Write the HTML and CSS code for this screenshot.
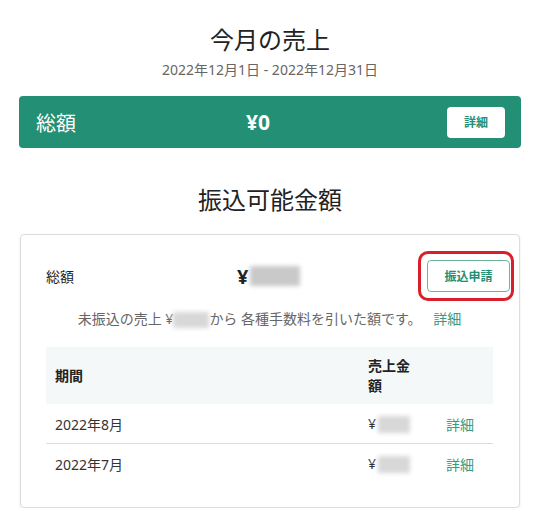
FILE: index.html
```html
<!DOCTYPE html>
<html lang="ja">
  <head>
    <meta charset="UTF-8" />
    <title>売上</title>
    <link rel="stylesheet" href="styles.css">
  </head>
  <body>
    <div class="page">
      <section class="month">
        <h2 class="section-title">今月の売上</h2>
        <p class="period">2022年12月1日 - 2022年12月31日</p>
        <div class="total-bar">
          <span class="total-label">総額</span>
          <span class="total-amount">¥0</span>
          <a href="#" class="btn-white">詳細</a>
        </div>
      </section>

      <section class="payout">
        <h2 class="section-title">振込可能金額</h2>
        <div class="card">
          <div class="card-top">
            <span class="card-label">総額</span>
            <span class="card-amount">¥<span class="masked masked-lg"></span></span>
            <span class="highlight">
              <a href="#" class="btn-outline">振込申請</a>
            </span>
          </div>
          <p class="note">
            未振込の売上 ¥<span class="masked masked-sm"></span>から 各種手数料を引いた額です。
            <a href="#" class="link">詳細</a>
          </p>

          <table class="history">
            <colgroup>
              <col class="col-period">
              <col class="col-amount">
              <col class="col-link">
            </colgroup>
            <thead>
              <tr>
                <th>期間</th>
                <th class="th-amount">売上金額</th>
                <th></th>
              </tr>
            </thead>
            <tbody>
              <tr>
                <td>2022年8月</td>
                <td>¥<span class="masked masked-row"></span></td>
                <td><a href="#" class="link">詳細</a></td>
              </tr>
              <tr>
                <td>2022年7月</td>
                <td>¥<span class="masked masked-row"></span></td>
                <td><a href="#" class="link">詳細</a></td>
              </tr>
            </tbody>
          </table>
        </div>
      </section>
    </div>
  </body>
</html>
```

FILE: styles.css
```css
body {
  font-family: "Noto Sans", "Noto Sans CJK JP", sans-serif;
  background-color: #fff;
  color: #222;
  margin: 0;
  padding: 0;
}

.page {
  margin: 0 20px 0 19px;
  padding-top: 22px;
}

.section-title {
  margin: 0;
  text-align: center;
  font-size: 24px;
  font-weight: normal;
  line-height: 35px;
  color: #222;
}

.period {
  margin: 3px 0 0;
  text-align: center;
  font-size: 14px;
  line-height: 20px;
  color: #666;
}

.total-bar {
  margin-top: 16px;
  height: 52px;
  background-color: #238f74;
  border-radius: 4px;
  display: flex;
  align-items: center;
  padding: 0 16px 0 17px;
  color: white;
}

.total-label {
  font-size: 20px;
  width: 210px;
}

.total-amount {
  font-size: 21px;
  font-weight: bold;
  flex: 1;
}

.btn-white {
  background-color: white;
  color: #238f74;
  text-decoration: none;
  font-size: 12px;
  font-weight: bold;
  width: 58px;
  height: 31px;
  border-radius: 4px;
  display: flex;
  align-items: center;
  justify-content: center;
}

.payout {
  margin-top: 34px;
}

.card {
  margin: 17px 1px 0;
  border: 1px solid #ddd;
  border-radius: 4px;
  box-shadow: 0 1px 3px rgba(0, 0, 0, 0.08);
  padding: 16px 26px 24px 25px;
}

.card-top {
  display: flex;
  align-items: center;
  height: 50px;
}

.card-label {
  font-size: 14px;
  width: 191px;
}

.card-amount {
  font-size: 20px;
  font-weight: bold;
  flex: 1;
  display: flex;
  align-items: center;
}

.masked {
  display: inline-block;
  background-color: #c9c9c9;
  filter: blur(2px);
  vertical-align: middle;
}

.masked-lg {
  width: 50px;
  height: 20px;
  margin-left: 2px;
}

.masked-sm {
  width: 36px;
  height: 16px;
  background-color: #d8d8d8;
}

.masked-row {
  width: 32px;
  height: 17px;
  margin-left: 2px;
  background-color: #d8d8d8;
}

/* 赤枠で囲んだ振込申請ボタン */
.highlight {
  border: 3px solid #d9202a;
  border-radius: 10px;
  padding: 6px 1px 6px 6px;
  margin-right: -21px;
  display: flex;
}

.btn-outline {
  box-sizing: border-box;
  width: 83px;
  height: 32px;
  border: 1px solid #6fb39e;
  border-radius: 4px;
  color: #238f74;
  font-size: 12px;
  font-weight: bold;
  text-decoration: none;
  display: flex;
  align-items: center;
  justify-content: center;
}

.note {
  margin: 8px 0 0;
  text-align: center;
  font-size: 14px;
  line-height: 20px;
  color: #666;
}

.link {
  color: #3a9a80;
  text-decoration: none;
  margin-left: 8px;
}

.history {
  width: 100%;
  margin-top: 18px;
  border-collapse: collapse;
  table-layout: fixed;
  font-size: 14px;
}

.col-amount {
  width: 78px;
}

.col-link {
  width: 56px;
}

.history thead tr {
  background-color: #f4f8f9;
}

.history th {
  text-align: left;
  font-weight: bold;
  height: 57px;
  padding: 0 9px;
  line-height: 20px;
}

.history th.th-amount {
  padding-right: 21px;
}

.history td {
  height: 39px;
  padding: 0 9px;
  color: #333;
}

.history tbody tr + tr td {
  border-top: 1px solid #ddd;
}

.history td .link {
  margin-left: 0;
}
```
